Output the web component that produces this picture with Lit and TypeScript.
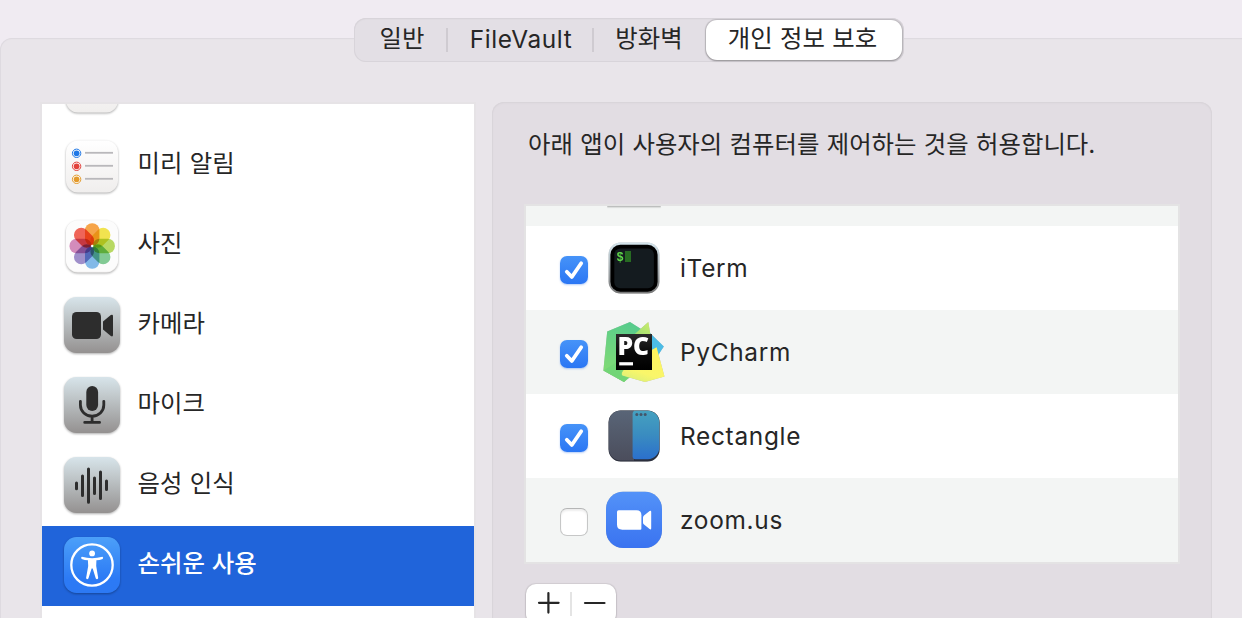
import { LitElement, html, css, svg, nothing } from "lit";
import { customElement, property } from "lit/decorators.js";

const petals: [number, string][] = [
  [0, "#f59a35"],
  [45, "#f0e03c"],
  [90, "#b0d552"],
  [135, "#74c488"],
  [180, "#74b2e6"],
  [225, "#9583c4"],
  [270, "#cf7fb4"],
  [315, "#ee5446"],
];

const greyTile = svg`
  <defs>
    <linearGradient id="grey" x1="0" y1="0" x2="0" y2="1">
      <stop offset="0" stop-color="#d7e4ea" />
      <stop offset="0.3" stop-color="#c4cccf" />
      <stop offset="1" stop-color="#949190" />
    </linearGradient>
  </defs>
  <rect width="56" height="56" rx="12.5" fill="url(#grey)" />`;

const whiteTile = svg`
  <defs>
    <linearGradient id="white" x1="0" y1="0" x2="0" y2="1">
      <stop offset="0" stop-color="#ffffff" />
      <stop offset="1" stop-color="#f0eeed" />
    </linearGradient>
  </defs>
  <rect x="2" y="3.4" width="52" height="52" rx="12" fill="url(#white)" />`;

const reminderLine = (y: number, color: string) => svg`
  <circle cx="12.6" cy=${y} r="4.2" fill="#fff" stroke=${color} stroke-width="1" />
  <circle cx="12.6" cy=${y} r="2.9" fill=${color} />
  <path d=${`M21 ${y - 0.5}H49`} stroke="#b9b8bb" stroke-width="1.8" />`;

const sideIcons: Record<string, unknown> = {
  blank: whiteTile,
  reminders: svg`${whiteTile}
    ${reminderLine(16.3, "#1f78e6")}${reminderLine(29.3, "#e2413b")}${reminderLine(42.3, "#e39a2b")}`,
  photos: svg`${whiteTile}
    <rect x="2" y="3.4" width="52" height="51.4" rx="12" fill="#fcfcfc" />
    <g class="petals">
      ${petals.map(
        ([angle, color]) => svg`<rect x="21" y="6.3" width="14.4" height="22.2" rx="7" fill=${color}
          transform=${`rotate(${angle} 28.2 29)`} />`,
      )}
    </g>
    <circle cx="28.2" cy="29" r="1.2" fill="#fff" />`,
  camera: svg`${greyTile}
    <rect x="8" y="15" width="29" height="27" rx="4.6" fill="#2d2d2d" />
    <path d="M39 24.6L46.8 18.1Q49 17 49 19.2V38Q49 40.2 46.8 39.1L39 32.6Z" fill="#2d2d2d" />`,
  mic: svg`${greyTile}
    <rect x="22.3" y="9" width="11.8" height="25" rx="5.9" fill="#2d2d2d" />
    <path d="M16.4 24.3V28A11.7 11.2 0 0 0 39.8 28V24.3M28.1 39.5V45M20.7 45.4H35.6"
      fill="none" stroke="#2d2d2d" stroke-width="2.8" stroke-linecap="round" />`,
  speech: svg`${greyTile}
    <path d="M12.5 26V31.8M18.5 19V38.4M24.5 12V45.2M30.5 21V36.4M36.5 15V41.4M42.5 24V32.5"
      stroke="#2d2d2d" stroke-width="3" stroke-linecap="round" />`,
  access: svg`
    <defs>
      <linearGradient id="blue" x1="0" y1="0" x2="0" y2="1">
        <stop offset="0" stop-color="#4ca0f9" />
        <stop offset="0.75" stop-color="#2c7af5" />
        <stop offset="1" stop-color="#2c79f4" />
      </linearGradient>
    </defs>
    <rect width="56" height="56" rx="12.5" fill="url(#blue)" />
    <circle cx="28" cy="28" r="20.7" fill="none" stroke="#fff" stroke-width="2.3" />
    <circle cx="28.1" cy="16.4" r="2.9" fill="#fff" />
    <path d="M17.9 19.8Q28.1 22.6 38.4 19.8Q39.8 20.4 38.7 21.9Q35.5 23 32.4 23.3L32.2 29L34.2 41Q33.4 43 31.8 41.6L28.7 31.5H27.6L24.4 41.6Q22.8 43 22.1 41L24.2 29L23.9 23.3Q20.7 23 17.6 21.9Q16.4 20.4 17.9 19.8Z" fill="#fff" />`,
};

const appIcons: Record<string, unknown> = {
  iterm: svg`
    <defs>
      <linearGradient id="rim" x1="0" y1="0" x2="0" y2="1">
        <stop offset="0" stop-color="#d5e6ee" />
        <stop offset="1" stop-color="#777777" />
      </linearGradient>
    </defs>
    <rect x="6.6" y="6.4" width="50.8" height="51.2" rx="12" fill="url(#rim)" />
    <rect x="8.4" y="8.8" width="47.2" height="47" rx="10" fill="#000" />
    <rect x="12.3" y="12.6" width="39.6" height="39.6" rx="6" fill="#141b1f" />
    <text x="14.6" y="25" class="prompt">$</text>
    <rect x="23" y="15" width="6" height="11" fill="#276b22" />`,
  pycharm: svg`
    <defs>
      <linearGradient id="pgreen" x1="0.6" y1="0" x2="0.3" y2="1">
        <stop offset="0" stop-color="#57cc8c" />
        <stop offset="1" stop-color="#86dc72" />
      </linearGradient>
      <linearGradient id="plime" x1="0.8" y1="0" x2="0" y2="1">
        <stop offset="0" stop-color="#c6ea6c" />
        <stop offset="1" stop-color="#75d67a" />
      </linearGradient>
      <linearGradient id="pyellow" x1="0.7" y1="0" x2="0.3" y2="1">
        <stop offset="0" stop-color="#fff45c" />
        <stop offset="0.7" stop-color="#f9f66a" />
        <stop offset="1" stop-color="#dcf07a" />
      </linearGradient>
      <linearGradient id="pblack" x1="0" y1="0" x2="0" y2="1">
        <stop offset="0" stop-color="#2b2b2b" />
        <stop offset="0.5" stop-color="#0b0b0b" />
        <stop offset="1" stop-color="#000" />
      </linearGradient>
    </defs>
    <path d="M48 13L61.8 26.5L53 40L44 34Z" fill="#4bbce6" />
    <path d="M28 2L39 9V48L22 62L1.4 50.5L5.2 11.6Z" fill="url(#pgreen)" />
    <path d="M46.3 2L49 18L34 30L26 20Z" fill="url(#plime)" />
    <path d="M54.6 27.2L62.5 56.5L43 62L18.5 55L26 43Z" fill="url(#pyellow)" />
    <path d="M1.4 50.5L18 40L20 55.5L26 58L22 62Z" fill="#72d576" />
    <rect x="14" y="14" width="36" height="36" fill="url(#pblack)" />
    <text x="15.4" y="34.8" class="pc" textLength="31.6" lengthAdjust="spacingAndGlyphs">PC</text>
    <rect x="17.2" y="42.2" width="13.8" height="3.2" fill="#fff" />`,
  rectangle: svg`
    <defs>
      <linearGradient id="slate" x1="0" y1="0" x2="0" y2="1">
        <stop offset="0" stop-color="#596577" />
        <stop offset="1" stop-color="#4b4d5c" />
      </linearGradient>
      <linearGradient id="sea" x1="0" y1="0" x2="0" y2="1">
        <stop offset="0" stop-color="#45a1c0" />
        <stop offset="0.5" stop-color="#3a8cc0" />
        <stop offset="1" stop-color="#2b70cc" />
      </linearGradient>
    </defs>
    <rect x="6.6" y="6.6" width="51" height="51" rx="12" fill="#2b2f3c" />
    <path d="M18.3 6.8H32V56.4H18.3A11.7 11.7 0 0 1 6.8 45V18.3A11.5 11.5 0 0 1 18.3 6.8Z" fill="url(#slate)" />
    <path d="M33 6.8H45.8A11.7 11.7 0 0 1 57.3 18.5V43.5A11.7 11.7 0 0 1 45.8 55.2H33A2.5 2.5 0 0 1 30.6 52.7V9.2A2.5 2.5 0 0 1 33 6.8Z" fill="url(#sea)" />
    <g fill="#44566a"><circle cx="34.8" cy="10.4" r="1.5" /><circle cx="39" cy="10.4" r="1.5" /><circle cx="43.2" cy="10.4" r="1.5" /></g>`,
  zoom: svg`
    <defs>
      <linearGradient id="zblue" x1="0" y1="0" x2="0" y2="1">
        <stop offset="0" stop-color="#5392f8" />
        <stop offset="1" stop-color="#3a73f0" />
      </linearGradient>
    </defs>
    <rect x="4" y="3.8" width="56" height="56.2" rx="17" fill="url(#zblue)" />
    <path d="M16.6 22.3H34.5Q39.4 22.3 39.4 27.2V40.6Q39.4 41.8 38.2 41.8H20.3Q15 41.8 15 36.6V23.8Q15 22.3 16.6 22.3Z" fill="#fff" />
    <path d="M41 29.6Q41 28.4 42 27.5L47.6 23Q49.2 22 49.2 23.9V40.2Q49.2 42.1 47.6 41.1L42 36.6Q41 35.8 41 34.4Z" fill="#fff" />`,
};

@customElement("side-row")
export class SideRow extends LitElement {
  @property() icon = "";
  @property() label = "";

  static styles = css`
    :host {
      display: flex;
      align-items: center;
      gap: 17.5px;
      flex: none;
      height: 80px;
      padding: 0 22px;
      box-sizing: border-box;
      color: #262626;
    }
    :host([selected]) {
      background: #2064da;
      color: #fff;
      font-weight: 500;
    }
    .icon {
      width: 56px;
      height: 56px;
      margin-top: -2px;
      overflow: visible;
      filter: drop-shadow(0 1px 1px rgba(0, 0, 0, 0.32));
    }
    .petals {
      isolation: isolate;
    }
    .petals rect {
      mix-blend-mode: multiply;
      opacity: 0.9;
    }
    .label {
      line-height: 30px;
      margin-top: -6px;
    }
  `;

  render() {
    return html`
      <svg class="icon" viewBox="0 0 56 56">${sideIcons[this.icon]}</svg>
      <span class="label">${this.label}</span>
    `;
  }
}

@customElement("app-row")
export class AppRow extends LitElement {
  @property() icon = "";
  @property() label = "";
  @property({ type: Boolean }) checked = false;

  static styles = css`
    :host {
      display: flex;
      align-items: center;
      flex: none;
      height: 84px;
      padding-left: 34px;
      color: #262626;
    }
    .box {
      width: 28px;
      height: 28px;
      margin-top: 4px;
      box-sizing: border-box;
      border-radius: 7px;
      border: 1px solid #c6c7c7;
      border-top-color: #b5b6b6;
      background: #fff;
      box-shadow: inset 0 2px 2px rgba(0, 0, 0, 0.07);
    }
    .box.on {
      border: 0;
      background: linear-gradient(#4693f8, #2a76f4);
      box-shadow: 0 1px 2px rgba(40, 110, 230, 0.35);
    }
    .box svg {
      display: block;
    }
    .icon {
      width: 64px;
      height: 64px;
      margin-left: 14px;
      margin-right: 14px;
      filter: drop-shadow(0 0.5px 0.5px rgba(0, 0, 0, 0.25));
    }
    .label {
      line-height: 30px;
      letter-spacing: 0.7px;
    }
    .prompt {
      font: bold 12px "Liberation Mono", monospace;
      fill: #5fd84a;
    }
    .pc {
      font: 800 24px "Open Sans", sans-serif;
      fill: #fff;
    }
  `;

  render() {
    return html`
      <div class="box ${this.checked ? "on" : ""}">
        ${this.checked
          ? html`<svg width="28" height="28" viewBox="0 0 28 28">
              <path d="M6.8 15.8L11.8 21L21.2 7.2" fill="none" stroke="#fff" stroke-width="3.8" stroke-linecap="round" stroke-linejoin="round" />
            </svg>`
          : nothing}
      </div>
      <svg class="icon" viewBox="0 0 64 64">${appIcons[this.icon]}</svg>
      <span class="label">${this.label}</span>
    `;
  }
}

@customElement("app-root")
export class AppRoot extends LitElement {
  static styles = css`
    :host {
      display: flex;
      flex-direction: column;
      width: 1242px;
      height: 618px;
      overflow: hidden;
      box-sizing: border-box;
      padding-top: 18px;
      background: #f0ebf2;
      color: #262626;
      font-family: Inter, "Noto Sans CJK KR", sans-serif;
      font-size: 24.4px;
      word-spacing: 0.5px;
      -webkit-font-smoothing: antialiased;
    }
    .tabs {
      position: relative;
      z-index: 1;
      display: flex;
      align-items: center;
      flex: none;
      width: 550px;
      height: 44px;
      margin-left: 354px;
      box-sizing: border-box;
      padding: 0 2px;
      border-radius: 12px;
      background: #e3dfe5;
      box-shadow: inset 0 0 0 1px #d8d4da, inset 0 1px 2px rgba(0, 0, 0, 0.05);
    }
    .tab {
      display: flex;
      justify-content: center;
      height: 40px;
      line-height: 36px;
      white-space: nowrap;
      box-sizing: border-box;
    }
    .general {
      width: 90px;
      padding-left: 2px;
    }
    .vault {
      width: 144px;
      padding-left: 2px;
      line-height: 38px;
      letter-spacing: 0.6px;
    }
    .wall {
      width: 112px;
      padding-right: 2px;
    }
    .privacy {
      width: 196px;
      padding-right: 3px;
      border-radius: 11px;
      background: #fff;
      box-shadow: 0 0 1px 0.5px rgba(0, 0, 0, 0.14), 0 1px 2px rgba(0, 0, 0, 0.25);
    }
    .split {
      width: 2px;
      height: 24px;
      background: #cfcbd1;
    }
    .pane {
      display: flex;
      align-items: stretch;
      flex: 1;
      gap: 18px;
      width: 1260px;
      margin-top: -24px;
      padding: 64px 0 0 42px;
      box-sizing: border-box;
      border-radius: 12px;
      background: #e9e5ea;
      box-shadow: inset 0 0 0 1px #dedae0, inset 0 2px 1px rgba(0, 0, 0, 0.012);
    }
    .sidebar {
      display: flex;
      flex-direction: column;
      width: 432px;
      height: 516px;
      margin-top: 2px;
      overflow: hidden;
      background: #fff;
      box-shadow: 0 0 0 2px #e6e3e6;
    }
    .sidebar side-row:first-child {
      margin-top: -58px;
    }
    .detail {
      width: 720px;
      height: 540px;
      box-sizing: border-box;
      padding: 26px 32px 0;
      border-radius: 12px;
      background: #e2dde3;
      box-shadow: inset 0 0 0 1px #d9d5da, inset 0 1px 3px rgba(0, 0, 0, 0.04);
    }
    .intro {
      margin: 0 0 0 4px;
      line-height: 32px;
      white-space: nowrap;
    }
    .apps {
      display: flex;
      flex-direction: column;
      width: 652px;
      height: 356px;
      margin-top: 44px;
      overflow: hidden;
      border: 2px solid #e4e3e4;
      background: #fff;
    }
    .apps app-row:nth-child(odd) {
      background: #f3f5f4;
    }
    .above {
      display: flex;
      flex: none;
      height: 20px;
      padding-left: 81px;
      background: #f3f5f4;
    }
    .edge {
      width: 54px;
      height: 1px;
      border-radius: 0 0 12px 12px;
      background: #bdbfbe;
      box-shadow: 0 1px 1px rgba(0, 0, 0, 0.12);
    }
    .buttons {
      display: flex;
      align-items: center;
      width: 90px;
      height: 40px;
      margin: 20px 0 0 2px;
      border-radius: 10px;
      background: #fff;
      box-shadow: 0 0 1px 0.5px rgba(0, 0, 0, 0.07), 0 1px 2px rgba(0, 0, 0, 0.2);
    }
    .buttons svg {
      width: 44px;
      height: 40px;
    }
    .bar {
      width: 2px;
      height: 24px;
      background: #e4e4e4;
    }
  `;

  render() {
    return html`
      <nav class="tabs">
        <div class="tab general">일반</div>
        <div class="split"></div>
        <div class="tab vault">FileVault</div>
        <div class="split"></div>
        <div class="tab wall">방화벽</div>
        <div class="tab privacy">개인 정보 보호</div>
      </nav>
      <main class="pane">
        <div class="sidebar">
          <side-row icon="blank"></side-row>
          <side-row icon="reminders" label="미리 알림"></side-row>
          <side-row icon="photos" label="사진"></side-row>
          <side-row icon="camera" label="카메라"></side-row>
          <side-row icon="mic" label="마이크"></side-row>
          <side-row icon="speech" label="음성 인식"></side-row>
          <side-row selected icon="access" label="손쉬운 사용"></side-row>
        </div>
        <section class="detail">
          <p class="intro">아래 앱이 사용자의 컴퓨터를 제어하는 것을 허용합니다.</p>
          <div class="apps">
            <div class="above"><div class="edge"></div></div>
            <app-row checked icon="iterm" label="iTerm"></app-row>
            <app-row checked icon="pycharm" label="PyCharm"></app-row>
            <app-row checked icon="rectangle" label="Rectangle"></app-row>
            <app-row icon="zoom" label="zoom.us"></app-row>
          </div>
          <div class="buttons">
            <svg viewBox="0 0 44 40"><path d="M13 18.8H32.6M22.4 9V28.6" stroke="#262626" stroke-width="2.2" stroke-linecap="round" /></svg>
            <div class="bar"></div>
            <svg viewBox="0 0 44 40"><path d="M13 19H32.5" stroke="#262626" stroke-width="2.2" stroke-linecap="round" /></svg>
          </div>
        </section>
      </main>
    `;
  }
}
